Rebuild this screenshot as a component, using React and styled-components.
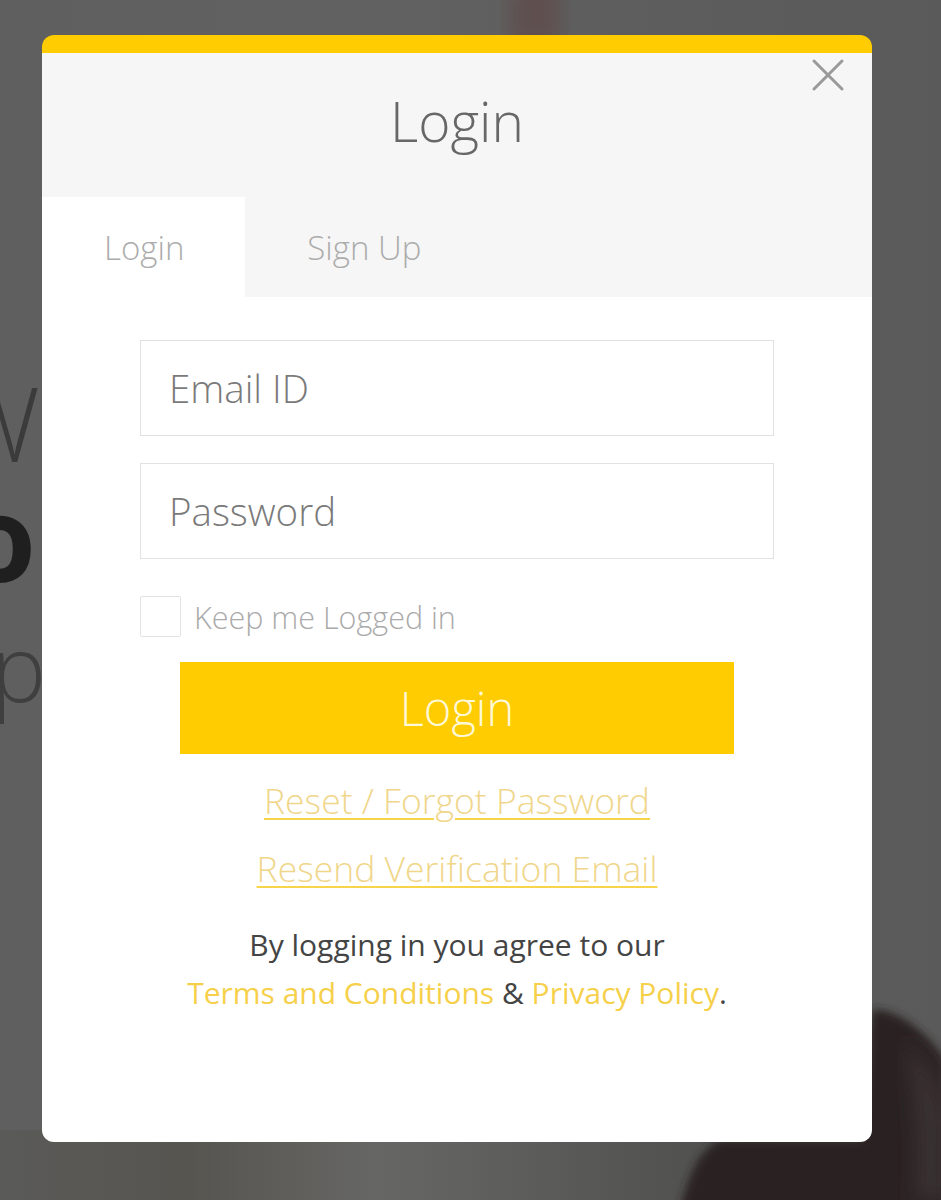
import React from "react";
import styled, { createGlobalStyle } from "styled-components";

const GlobalStyle = createGlobalStyle`
  html, body { margin: 0; padding: 0; }
  body { font-family: "Open Sans", "Liberation Sans", sans-serif; }
  * { box-sizing: border-box; }
`;

const Page = styled.div`
  position: relative;
  width: 941px;
  height: 1200px;
  overflow: hidden;
  background: linear-gradient(90deg, #5f5f5f 0%, #616161 40%, #5d5d5d 70%, #5a5a5a 100%);
`;

const Backdrop = styled.svg`
  position: absolute;
  inset: 0;
  width: 100%;
  height: 100%;
`;

const Hero = styled.div`
  position: relative;
  padding-top: 372px;
  width: 60px;
  display: flex;
  flex-direction: column;
`;

const HeroLine = styled.div`
  display: flex;
  justify-content: flex-end;
  overflow: hidden;
  width: ${(p) => p.$w}px;
  height: ${(p) => p.$h}px;
  font-size: ${(p) => p.$size}px;
  font-weight: ${(p) => p.$weight};
  color: ${(p) => p.$color};
  line-height: ${(p) => p.$h}px;
  white-space: nowrap;
`;

const Modal = styled.div`
  position: absolute;
  top: 35px;
  left: 42px;
  width: 830px;
  height: 1107px;
  background: #ffffff;
  border-top: 18px solid #fecc00;
  border-radius: 12px;
  overflow: hidden;
`;

const CloseButton = styled.button`
  position: absolute;
  top: 2px;
  right: 24px;
  width: 40px;
  height: 40px;
  padding: 0;
  border: none;
  background: transparent;
  display: flex;
  align-items: center;
  justify-content: center;
  cursor: pointer;
`;

const Header = styled.div`
  background: #f6f6f6;
`;

const Title = styled.h2`
  margin: 0;
  height: 144px;
  padding-bottom: 10px;
  display: flex;
  align-items: center;
  justify-content: center;
  font-size: 55px;
  font-weight: 300;
  color: #676767;
`;

const TabRow = styled.div`
  display: flex;
  height: 100px;
`;

const Tab = styled.div`
  display: flex;
  align-items: center;
  padding: 0 61px 0 62px;
  font-size: 33px;
  font-weight: 300;
  color: #acacac;
  background: ${(p) => (p.$active ? "#ffffff" : "transparent")};
`;

const Body = styled.div`
  padding: 43px 98px 0;
  display: flex;
  flex-direction: column;
`;

const Input = styled.input`
  width: 100%;
  height: 96px;
  border: 1px solid #e2e2e2;
  padding: 0 28px;
  font-family: inherit;
  font-size: 38.5px;
  font-weight: 300;
  color: #555;
  outline: none;
  &::placeholder { color: #7a7a7a; }
  & + & { margin-top: 27px; }
`;

const CheckRow = styled.label`
  display: flex;
  align-items: center;
  margin-top: 37px;
  height: 41px;
`;

const CheckBox = styled.span`
  width: 41px;
  height: 41px;
  border: 1px solid #e3e3e3;
  border-radius: 2px;
  background: #fff;
`;

const CheckLabel = styled.span`
  margin-left: 13px;
  font-size: 30.5px;
  font-weight: 300;
  color: #aaaaaa;
`;

const LoginButton = styled.button`
  align-self: center;
  width: 554px;
  height: 92px;
  margin-top: 25px;
  border: none;
  background: #fecc00;
  color: #fff8d6;
  font-family: inherit;
  font-size: 47px;
  font-weight: 300;
  cursor: pointer;
`;

const LinkStack = styled.div`
  display: flex;
  flex-direction: column;
  align-items: center;
  gap: 20px;
  margin-top: 22px;
`;

const UnderLink = styled.a`
  font-size: 35.5px;
  font-weight: 300;
  line-height: 48px;
  color: #f0d68b;
  text-decoration: underline;
  text-decoration-color: #f7d54a;
  text-decoration-thickness: 2px;
  text-underline-offset: 4px;
`;

const Terms = styled.p`
  margin: 29px 0 0;
  text-align: center;
  font-size: 30px;
  font-weight: 400;
  line-height: 48px;
  color: #444444;
`;

const TermsLink = styled.a`
  color: #f6d04a;
  text-decoration: none;
`;

export default function App() {
  return (
    <>
      <GlobalStyle />
      <Page>
        <Backdrop viewBox="0 0 941 1200" preserveAspectRatio="none">
          <defs>
            <filter id="blur" x="-20%" y="-20%" width="140%" height="140%">
              <feGaussianBlur stdDeviation="10" />
            </filter>
            <filter id="soft" x="-20%" y="-20%" width="140%" height="140%">
              <feGaussianBlur stdDeviation="4" />
            </filter>
            <linearGradient id="stripes" x1="0" x2="1" y1="0" y2="0">
              <stop offset="0" stopColor="#5a5a58" />
              <stop offset="0.2" stopColor="#575550" />
              <stop offset="0.4" stopColor="#666664" />
              <stop offset="0.55" stopColor="#5d5d5b" />
              <stop offset="0.7" stopColor="#535352" />
              <stop offset="1" stopColor="#4a4a4a" />
            </linearGradient>
          </defs>
          <rect x="0" y="1130" width="941" height="70" fill="url(#stripes)" />
          <rect x="510" y="-20" width="50" height="70" fill="#5f5050" filter="url(#blur)" />
          <path
            d="M872 1010 C 895 1008, 925 1030, 945 1060 L 945 1210 L 680 1210 C 690 1170, 700 1150, 720 1140 L 860 1140 C 866 1100, 868 1040, 872 1010 Z"
            fill="#292222"
            filter="url(#soft)"
          />
          <path d="M905 1040 C 925 1060, 940 1080, 945 1120 L 945 1200 L 915 1200 C 920 1150, 915 1090, 905 1040 Z" fill="#3a3131" filter="url(#blur)" />
        </Backdrop>
        <Hero>
          <HeroLine $w={40} $h={100} $size={104} $weight={300} $color="#3b3b3b">
            W
          </HeroLine>
          <HeroLine $w={36} $h={130} $size={118} $weight={700} $color="#1f1f1f">
            o
          </HeroLine>
          <HeroLine $w={46} $h={130} $size={92} $weight={300} $color="#3f3f3f">
            ap
          </HeroLine>
        </Hero>
        <Modal>
          <CloseButton aria-label="Close">
            <svg width="34" height="34" viewBox="0 0 34 34">
              <path d="M3 3 L31 31 M31 3 L3 31" stroke="#9a9a9a" strokeWidth="3" strokeLinecap="round" />
            </svg>
          </CloseButton>
          <Header>
            <Title>Login</Title>
            <TabRow>
              <Tab $active>Login</Tab>
              <Tab>Sign Up</Tab>
            </TabRow>
          </Header>
          <Body>
            <Input type="text" placeholder="Email ID" />
            <Input type="password" placeholder="Password" />
            <CheckRow>
              <CheckBox />
              <CheckLabel>Keep me Logged in</CheckLabel>
            </CheckRow>
            <LoginButton>Login</LoginButton>
            <LinkStack>
              <UnderLink href="#">Reset / Forgot Password</UnderLink>
              <UnderLink href="#">Resend Verification Email</UnderLink>
            </LinkStack>
            <Terms>
              By logging in you agree to our
              <br />
              <TermsLink href="#">Terms and Conditions</TermsLink> &amp;{" "}
              <TermsLink href="#">Privacy Policy</TermsLink>.
            </Terms>
          </Body>
        </Modal>
      </Page>
    </>
  );
}
